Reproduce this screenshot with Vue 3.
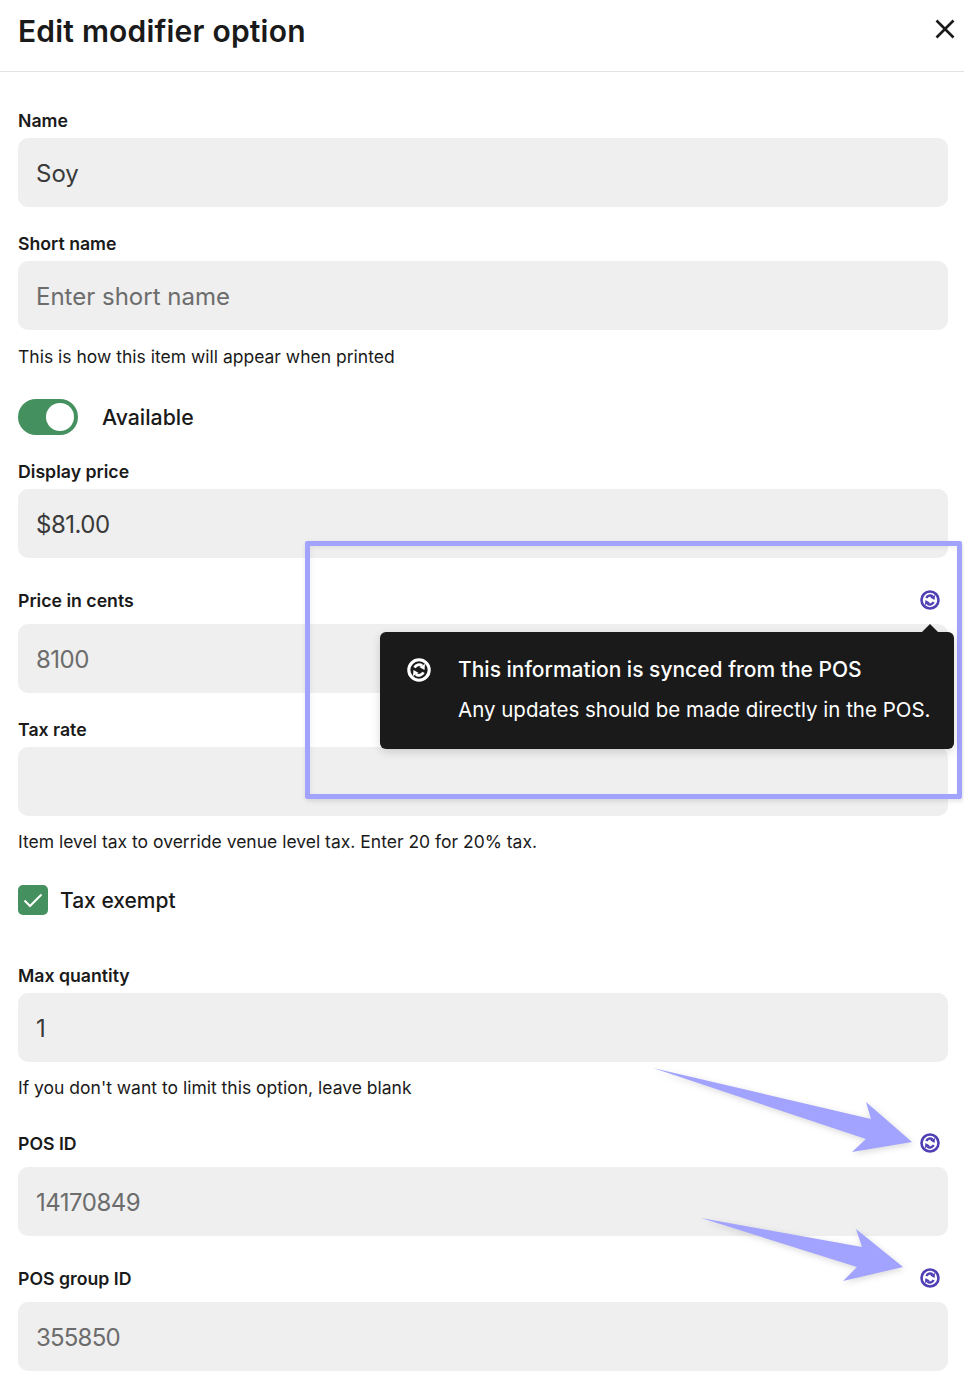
<script setup>
</script>

<template>
  <div class="page">
    <svg class="defs" width="0" height="0" aria-hidden="true">
      <symbol id="sync-icon" viewBox="0 0 20 20">
        <circle cx="10" cy="10" r="8.5" fill="none" stroke="currentColor" stroke-width="2.6"/>
        <path d="M6.3 8A4.4 4.4 0 0 1 12.6 6.2" fill="none" stroke="currentColor" stroke-width="2.3"/>
        <path d="M15 4.9L14.6 10L10.2 7.6z" fill="currentColor"/>
        <path d="M13.7 12A4.4 4.4 0 0 1 7.4 13.8" fill="none" stroke="currentColor" stroke-width="2.3"/>
        <path d="M5 15.1L5.4 10L9.8 12.4z" fill="currentColor"/>
      </symbol>
    </svg>

    <header class="head">
      <h1>Edit modifier option</h1>
      <svg class="close" width="20" height="20" viewBox="0 0 20 20"><path d="M1.5 1.5L18.5 18.5M18.5 1.5L1.5 18.5" stroke="#1a1a1a" stroke-width="2.6" fill="none"/></svg>
    </header>
    <main class="form">
      <label class="lab first">Name</label>
      <div class="inp val">Soy</div>

      <label class="lab">Short name</label>
      <div class="inp muted">Enter short name</div>
      <p class="help hs">This is how this item will appear when printed</p>

      <div class="toggle-row">
        <span class="toggle"><span class="knob"></span></span>
        <span class="opt">Available</span>
      </div>

      <label class="lab">Display price</label>
      <div class="inp val num">$81.00</div>

      <div class="lab-row lr1">
        <label>Price in cents</label>
        <svg class="sync"><use href="#sync-icon"/></svg>
      </div>
      <div class="inp muted num">8100</div>

      <label class="lab">Tax rate</label>
      <div class="inp"></div>
      <p class="help">Item level tax to override venue level tax. Enter 20 for 20% tax.</p>

      <div class="check-row">
        <span class="check"><svg width="30" height="30" viewBox="0 0 30 30"><path d="M6.5 15.5L12 21L23.5 9.5" stroke="#fff" stroke-width="2" fill="none"/></svg></span>
        <span class="opt small">Tax exempt</span>
      </div>

      <label class="lab max">Max quantity</label>
      <div class="inp val">1</div>
      <p class="help">If you don't want to limit this option, leave blank</p>

      <div class="lab-row lr2">
        <label>POS ID</label>
        <svg class="sync"><use href="#sync-icon"/></svg>
      </div>
      <div class="inp muted num">14170849</div>

      <div class="lab-row lr1">
        <label>POS group ID</label>
        <svg class="sync"><use href="#sync-icon"/></svg>
      </div>
      <div class="inp muted num wide">355850</div>
    </main>

    <div class="frame"></div>

    <div class="tip">
      <span class="tip-arrow"></span>
      <svg class="tip-icon"><use href="#sync-icon"/></svg>
      <div class="tip-text">
        <strong>This information is synced from the POS</strong>
        <span>Any updates should be made directly in the POS.</span>
      </div>
    </div>

    <svg class="arrows" width="964" height="1384" viewBox="0 0 964 1384">
      <polygon points="653,1068 871,1119 866,1102 912,1142 852,1152 866,1139" />
      <polygon points="701,1218 862,1247 856,1229 903,1267 843,1281 857,1267" />
    </svg>
  </div>
</template>

<style>
html, body { margin: 0; background: #fff; }
</style>

<style scoped>
.page {
  position: relative;
  width: 964px;
  height: 1384px;
  overflow: hidden;
  background: #fff;
  color: #1a1a1a;
  font-family: Inter, "Noto Sans", sans-serif;
}
.defs { position: absolute; }
.head {
  height: 71px;
  border-bottom: 1px solid #e3e3e3;
  display: flex;
  justify-content: space-between;
  padding: 0 9px 0 18px;
}
.head h1 {
  margin: 0;
  padding-top: 12px;
  font-size: 30px;
  line-height: 38px;
  font-weight: 600;
  letter-spacing: 0.2px;
}
.close { margin-top: 19px; }
.form {
  display: flex;
  flex-direction: column;
  padding: 0 16px 0 18px;
}
.lab, .lab-row label {
  font-size: 17.7px;
  line-height: 20px;
  font-weight: 600;
}
.lab { margin: 25px 0 7px; padding-top: 2px; }
.lab.first { margin-top: 37px; }
.lab.max { margin-top: 49px; }
.lab-row {
  display: flex;
  justify-content: space-between;
  align-items: center;
  height: 20px;
  margin-bottom: 14px;
  padding-right: 8px;
}
.lab-row label { padding-top: 1px; }
.lr1 { margin-top: 32px; }
.lr2 { margin-top: 35px; }
.sync { width: 20px; height: 20px; color: #4f3fb5; }
.inp {
  height: 69px;
  box-sizing: border-box;
  border-radius: 10px;
  background: #efefef;
  display: flex;
  align-items: center;
  padding: 2px 18px 0;
  font-size: 24px;
}
.val { color: #3a3a3a; }
.muted { color: #6c6c6c; }
.num { letter-spacing: -0.5px; }
.wide { letter-spacing: -0.8px; }
.help {
  margin: 15px 0 0;
  font-size: 17.5px;
  line-height: 20px;
  color: #1a1a1a;
  padding-top: 1px;
}
.hs { margin-top: 16px; }
.toggle-row {
  display: flex;
  align-items: center;
  margin-top: 32px;
  gap: 24px;
}
.toggle {
  width: 60px;
  height: 36px;
  border-radius: 18px;
  background: #45905f;
  display: block;
  position: relative;
}
.knob {
  position: absolute;
  left: 28px;
  top: 4px;
  width: 28px;
  height: 28px;
  border-radius: 50%;
  background: #fff;
}
.opt {
  font-size: 21.3px;
  font-weight: 500;
}
.opt.small { font-size: 21px; }
.check-row {
  display: flex;
  align-items: center;
  gap: 12px;
  margin-top: 33px;
}
.check {
  width: 30px;
  height: 30px;
  border-radius: 5px;
  background: #45905f;
  display: block;
}
.check svg { display: block; }
.frame {
  position: absolute;
  left: 305px;
  top: 541px;
  width: 647px;
  height: 248px;
  border: 5px solid #a2a2ff;
  border-radius: 2px;
  box-shadow: 1px 2px 5px rgba(0, 0, 0, 0.12), inset 1px 2px 5px rgba(0, 0, 0, 0.06);
}
.tip {
  position: absolute;
  left: 380px;
  top: 632px;
  width: 574px;
  height: 117px;
  box-sizing: border-box;
  background: #1a1a1a;
  border-radius: 6px;
  color: #fff;
  display: flex;
  gap: 27px;
  padding: 26px 0 0 27px;
  box-shadow: 0 3px 10px rgba(0, 0, 0, 0.15);
}
.tip-arrow {
  position: absolute;
  left: 542px;
  top: -8px;
  width: 0;
  height: 0;
  border-left: 8px solid transparent;
  border-right: 8px solid transparent;
  border-bottom: 8px solid #1a1a1a;
}
.tip-icon { width: 24px; height: 24px; flex: none; color: #fff; }
.tip-text {
  display: flex;
  flex-direction: column;
  gap: 16px;
  font-size: 21px;
  line-height: 24px;
  white-space: nowrap;
}
.tip-text strong { font-weight: 500; }
.tip-text span { font-size: 20.5px; }
.arrows {
  position: absolute;
  left: 0;
  top: 0;
  fill: #a2a2ff;
  filter: drop-shadow(1px 2px 3px rgba(0, 0, 0, 0.15));
}
</style>
